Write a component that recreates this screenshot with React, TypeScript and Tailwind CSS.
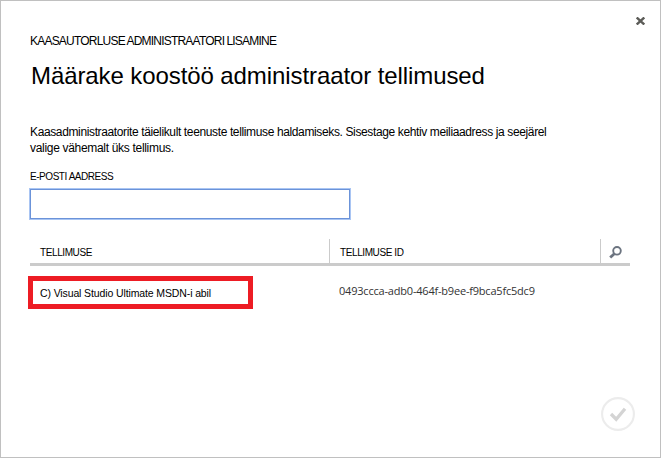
const CloseIcon = () => (
  <svg width="9" height="8" viewBox="0 0 9 8" fill="none" stroke="#5c5c58" strokeWidth="2.4">
    <path d="M0.7 0.5 8.3 7.5M8.3 0.5 0.7 7.5" />
  </svg>
);

const SearchIcon = () => (
  <svg width="13" height="13" viewBox="0 0 13 13" fill="none" stroke="#6c7480">
    <circle cx="8" cy="4.8" r="3.8" strokeWidth="1.9" />
    <path d="M5.3 7.7 1.2 11.6" strokeWidth="2.8" />
  </svg>
);

const ConfirmIcon = () => (
  <svg width="34" height="34" viewBox="0 0 34 34" fill="none">
    <circle cx="17" cy="17" r="15.9" stroke="#ececec" strokeWidth="2.1" />
    <path d="M10 17 15.2 22.2 24 11.8" stroke="#d4d4d4" strokeWidth="3.3" />
  </svg>
);

export default function App() {
  return (
    <main className="flex h-[458px] w-[661px] flex-col border border-[#c0c0c0] bg-white font-['Liberation_Sans',Arial,sans-serif] text-black">
      <header className="flex h-[99px] items-start justify-between pr-[15px] pl-[29px]">
        <div className="whitespace-nowrap">
          <p className="mt-8 h-4 text-[12px] leading-4 tracking-[-0.79px] [word-spacing:-0.3px]">KAASAUTORLUSE ADMINISTRAATORI LISAMINE</p>
          <h1 className="mt-[13px] h-7 pl-px text-[24px] leading-7 tracking-[-0.09px]">Määrake koostöö administraator tellimused</h1>
        </div>
        <button aria-label="Sulge" className="mt-4"><CloseIcon /></button>
      </header>

      <section className="mt-6 pl-[29px] whitespace-nowrap">
        <p className="text-[12px] leading-4 tracking-[-0.37px]">Kaasadministraatorite täielikult teenuste tellimuse haldamiseks. Sisestage kehtiv meiliaadress ja seejärel</p>
        <p className="text-[12px] leading-4 tracking-[-0.31px]">valige vähemalt üks tellimus.</p>
        <label htmlFor="email" className="mt-[15px] block h-3 w-fit text-[10px] leading-3 tracking-[-0.45px]">E-POSTI AADRESS</label>
        <input id="email" className="mt-[6px] block h-[30px] w-80 border border-[#6b93d9] bg-white shadow-[0_0_0_1px_#a9c5f3] outline-none" />
      </section>

      <section className="mt-5 mr-[30px] ml-[29px]">
        <div className="flex h-[27px] border-b-3 border-[#cbcbcb] text-[10px] leading-3 tracking-[-0.4px] whitespace-nowrap">
          <div className="w-[300px] border-r border-[#cbcbcb] pt-2 pl-[10px]">TELLIMUSE</div>
          <div className="w-[271px] border-r border-[#cbcbcb] pt-2 pl-[10px]">TELLIMUSE ID</div>
          <div className="pt-[7px] pl-2"><SearchIcon /></div>
        </div>
        <div className="mt-[10px] flex">
          <div className="-ml-[2px] h-[33px] w-[225px] border-5 border-[#ed1c24] pt-[6px] pl-[7px] text-[10.5px] leading-3 tracking-[-0.12px] whitespace-nowrap">C) Visual Studio Ultimate MSDN-i abil</div>
          <div className="ml-[86px] pt-2 font-['Open_Sans',sans-serif] text-[11px] leading-[14px] tracking-[-0.2px] text-[#333]">0493ccca-adb0-464f-b9ee-f9bca5fc5dc9</div>
        </div>
      </section>

      <footer className="mt-auto mr-[25px] mb-[26px] flex justify-end">
        <button aria-label="Kinnita"><ConfirmIcon /></button>
      </footer>
    </main>
  );
}
